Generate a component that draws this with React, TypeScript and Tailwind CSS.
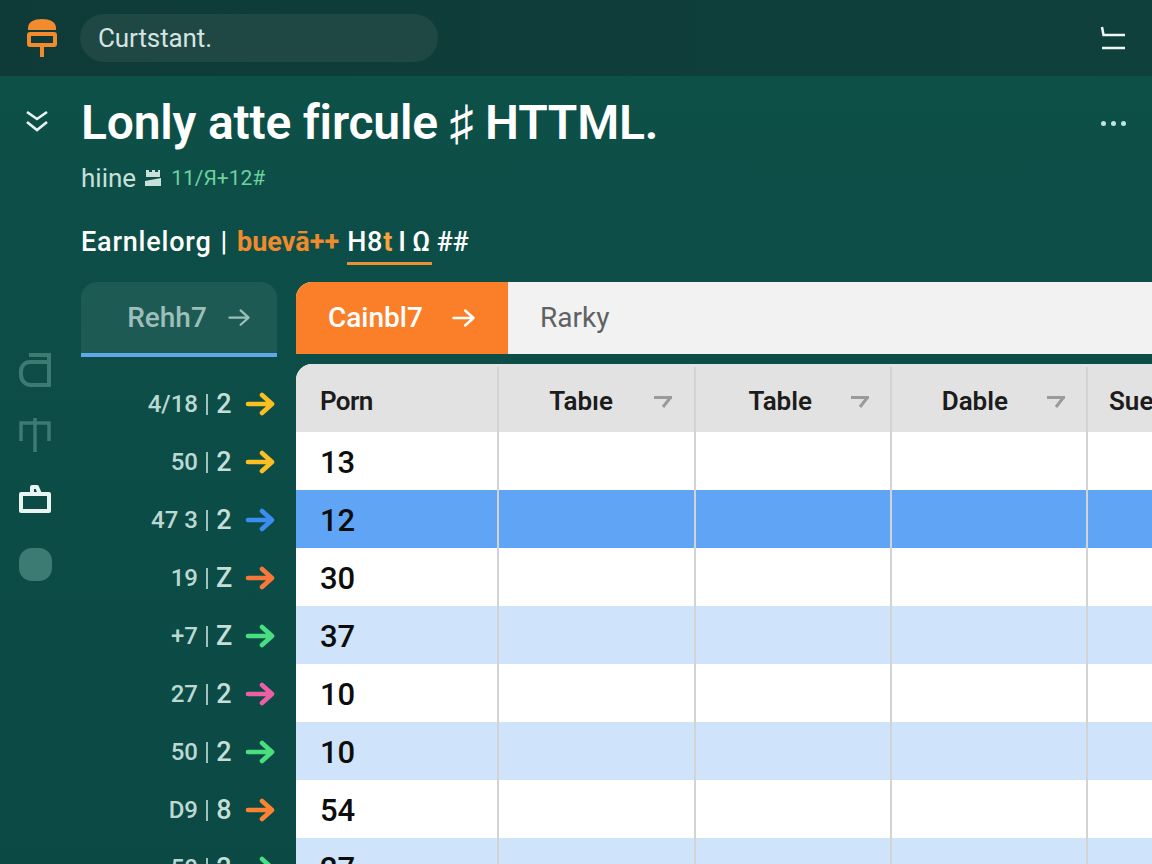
import React from "react";

const rows = [
  { a: "4/18", b: "2", c: "#fbbf24", n: "13", bg: "bg-white" },
  { a: "50", b: "2", c: "#fbbf24", n: "12", bg: "bg-[#60a5f5]" },
  { a: "47 3", b: "2", c: "#3b8df0", n: "30", bg: "bg-white" },
  { a: "19", b: "Z", c: "#f9773a", n: "37", bg: "bg-[#cfe3fa]" },
  { a: "+7", b: "Z", c: "#4ade80", n: "10", bg: "bg-white" },
  { a: "27", b: "2", c: "#ec5fa5", n: "10", bg: "bg-[#cfe3fa]" },
  { a: "50", b: "2", c: "#4ade80", n: "54", bg: "bg-white" },
  { a: "D9", b: "8", c: "#fb8332", n: "27", bg: "bg-[#cfe3fa]" },
  { a: "50", b: "2", c: "#4ade80", n: "", bg: "bg-white" },
];

function Arrow({ color, size = 30, width = 4.6 }: { color: string; size?: number; width?: number }) {
  return (
    <svg width={size} height={(size * 24) / 30} viewBox="0 0 30 24" fill="none" stroke={color} strokeWidth={width} strokeLinecap="round" strokeLinejoin="round">
      <path d="M3 12h24M17 3l10 9-10 9" />
    </svg>
  );
}

function Sort() {
  return (
    <svg width="20" height="14" viewBox="0 0 20 14" fill="none" stroke="#9a9a9a" strokeWidth="3">
      <path d="M1 2.5h18M17 3l-7 9" />
    </svg>
  );
}

function Logo() {
  return (
    <svg width="32" height="42" viewBox="0 0 32 42" fill="none">
      <path d="M2 11c0-6 6-9 14-9s14 3 14 9v2H2z" fill="#f28a2e" />
      <rect x="3" y="17" width="26" height="11" rx="1" stroke="#f28a2e" strokeWidth="4" />
      <rect x="14" y="28" width="4" height="12" fill="#f28a2e" />
    </svg>
  );
}

const headers = ["Tabıe", "Table", "Dable"];

export default function App() {
  return (
    <div className="w-[1152px] h-[864px] overflow-hidden flex flex-col bg-[#0c4b46] font-['Roboto',sans-serif]">
      <header className="h-[76px] shrink-0 flex items-center bg-gradient-to-r from-[#0e3b38] to-[#0f403c] pl-[26px] pr-[26px]">
        <Logo />
        <div className="ml-[22px] w-[358px] h-[48px] rounded-full bg-[#1f4744] flex items-center pl-[18px] text-[26px] text-[#d5e4e1] tracking-[-0.1px]">
          Curtstant.
        </div>
        <svg className="ml-auto" width="26" height="24" viewBox="0 0 26 24" fill="none" stroke="#eef7f4" strokeWidth="2.5">
          <path d="M2 1l1.5 8H25M2 22h23" />
        </svg>
      </header>

      <div className="flex-1 flex min-h-0 bg-gradient-to-b from-[#0d5048] to-[#0b4945]">
        <aside className="w-[81px] shrink-0 flex flex-col items-center pr-[11px]">
          <svg className="mt-[32px] ml-[4px]" width="24" height="26" viewBox="0 0 24 26" fill="none" stroke="#e9f5f1" strokeWidth="2.6" strokeLinejoin="miter">
            <path d="M2 4l10 7 10-7M2 14l10 8 10-8" />
          </svg>
          <svg className="mt-[218px]" width="34" height="36" viewBox="0 0 34 36" fill="none" stroke="#3c7b74" strokeWidth="4">
            <path d="M11 3h20v30H13a10 10 0 0 1-10-10v-4a9 9 0 0 1 9-9h19" />
          </svg>
          <svg className="mt-[29px]" width="34" height="36" viewBox="0 0 34 36" fill="none" stroke="#3c7b74" strokeWidth="3.5">
            <path d="M3 24V6h28v18M17 1v34" />
          </svg>
          <svg className="mt-[30px]" width="34" height="32" viewBox="0 0 34 32" fill="none" stroke="#e9f5f1" strokeWidth="4" strokeLinejoin="round">
            <path d="M14 11V4h5l3 7M3 11h28v17H3z" />
          </svg>
          <div className="mt-[33px] w-[33px] h-[33px] rounded-[13px] bg-[#3c7b74]" />
        </aside>

        <main className="flex-1 min-w-0 flex flex-col">
          <div className="flex items-center h-[46px] mt-[24px] pr-[26px]">
            <h1 className="text-[48px] font-semibold text-white leading-none tracking-[-0.2px] whitespace-nowrap">Lonly atte fircule ♯ HTTML.</h1>
            <div className="ml-auto flex gap-[5px]">
              <span className="w-[5px] h-[5px] rounded-full bg-[#bfe6de]" />
              <span className="w-[5px] h-[5px] rounded-full bg-[#bfe6de]" />
              <span className="w-[5px] h-[5px] rounded-full bg-[#bfe6de]" />
            </div>
          </div>
          <div className="flex items-center h-[28px] mt-[18px] text-[26px] leading-none">
            <span className="text-[#c8e0da] tracking-normal">hiine</span>
            <svg className="ml-[8px]" width="18" height="20" viewBox="0 0 18 20" fill="#c8e0da">
              <path d="M2 9V2h3v2h3V2h3v2h3V2h2v7zM1 13l16-3v8H1z" />
            </svg>
            <span className="ml-[9px] text-[21px] text-[#6fd09e]">11/Я+12#</span>
          </div>
          <div className="mt-[37px] flex items-center h-[26px] text-[27px] leading-none text-white font-medium tracking-[0.8px] whitespace-nowrap">
            <span>Earnlelorg</span>
            <span className="ml-[9px]">|</span>
            <span className="ml-[9px] font-bold text-[#f08a2c] tracking-normal">buevā++</span>
            <span className="ml-[8px] relative">
              H8<span className="text-[#f5a33c] font-bold">t</span>
              <span className="absolute left-0 w-[85px] top-[33px] h-[3px] bg-[#ef8f35]" />
            </span>
            <span className="ml-[5px] tracking-[-0.2px]">I Ω ##</span>
          </div>

          <div className="mt-[27px] flex flex-1 min-h-0 gap-[19px]">
            <div className="w-[196px] shrink-0">
              <div className="h-[75px] rounded-t-[16px] bg-[#1d5a54] border-b-[4px] border-[#60a8e8] flex items-center justify-center gap-[20px] text-[28px] font-medium text-[#9dbfb9] pl-[20px]">
                Rehh7
                <Arrow color="#9dbfb9" size={24} width={2.8} />
              </div>
              <div className="pt-[18px]">
                {rows.map((r, i) => (
                  <div key={i} className="h-[58px] flex items-center justify-end pr-[2px] text-[24px] font-medium text-[#bcd8d2]">
                    <span>{r.a}</span>
                    <span className="mx-[8px] w-[2px] h-[21px] bg-[#9fc3bc]" />
                    <span className="w-[16px] text-center text-[27px] text-[#c4ded8]">{r.b}</span>
                    <span className="ml-[13px] flex"><Arrow color={r.c} /></span>
                  </div>
                ))}
              </div>
            </div>

            <div className="flex-1 min-w-0 flex flex-col">
              <div className="h-[72px] shrink-0 flex bg-[#f2f2f2] rounded-tl-[16px] overflow-hidden">
                <div className="w-[212px] bg-[#fb7f29] flex items-center pl-[32px] text-white text-[28px] font-medium">
                  Cainbl7
                  <span className="ml-[28px] flex"><Arrow color="#ffffff" size={25} width={3} /></span>
                </div>
                <div className="flex items-center pl-[32px] text-[28px] text-[#5e6264]">Rarky</div>
              </div>
              <div className="mt-[10px] flex-1 min-h-0 bg-white rounded-tl-[16px] overflow-hidden">
                <div className="h-[68px] flex bg-[#e2e2e2] text-[26px] font-semibold text-[#1c1c1c] pt-[3px]">
                  <div className="w-[203px] shrink-0 border-r-2 border-[#d3d3d3] flex items-center pl-[24px] pt-[4px] tracking-tight">Porn</div>
                  <div className="w-[197px] shrink-0 border-r-2 border-[#d3d3d3] flex items-center justify-end pr-[21px] pt-[4px] gap-[40px]">
                    {headers[0]}
                    <Sort />
                  </div>
                  {headers.slice(1).map((h) => (
                    <div key={h} className="w-[196px] shrink-0 border-r-2 border-[#d3d3d3] flex items-center justify-end pr-[20px] pt-[4px] gap-[38px]">
                      {h}
                      <Sort />
                    </div>
                  ))}
                  <div className="flex items-center pl-[21px] pt-[4px]">Sue</div>
                </div>
                {rows.slice(0, 8).map((r, i) => (
                  <div key={i} className={`h-[58px] flex ${r.bg} text-[31px] font-medium text-[#0d0d0d]`}>
                    <div className="w-[203px] shrink-0 border-r-2 border-[#d3d3d3] flex items-center pl-[24px] pt-[4px]">{r.n}</div>
                    <div className="w-[197px] shrink-0 border-r-2 border-[#d3d3d3]" />
                    <div className="w-[196px] shrink-0 border-r-2 border-[#d3d3d3]" />
                    <div className="w-[196px] shrink-0 border-r-2 border-[#d3d3d3]" />
                    <div className="flex-1" />
                  </div>
                ))}
              </div>
            </div>
          </div>
        </main>
      </div>
    </div>
  );
}
